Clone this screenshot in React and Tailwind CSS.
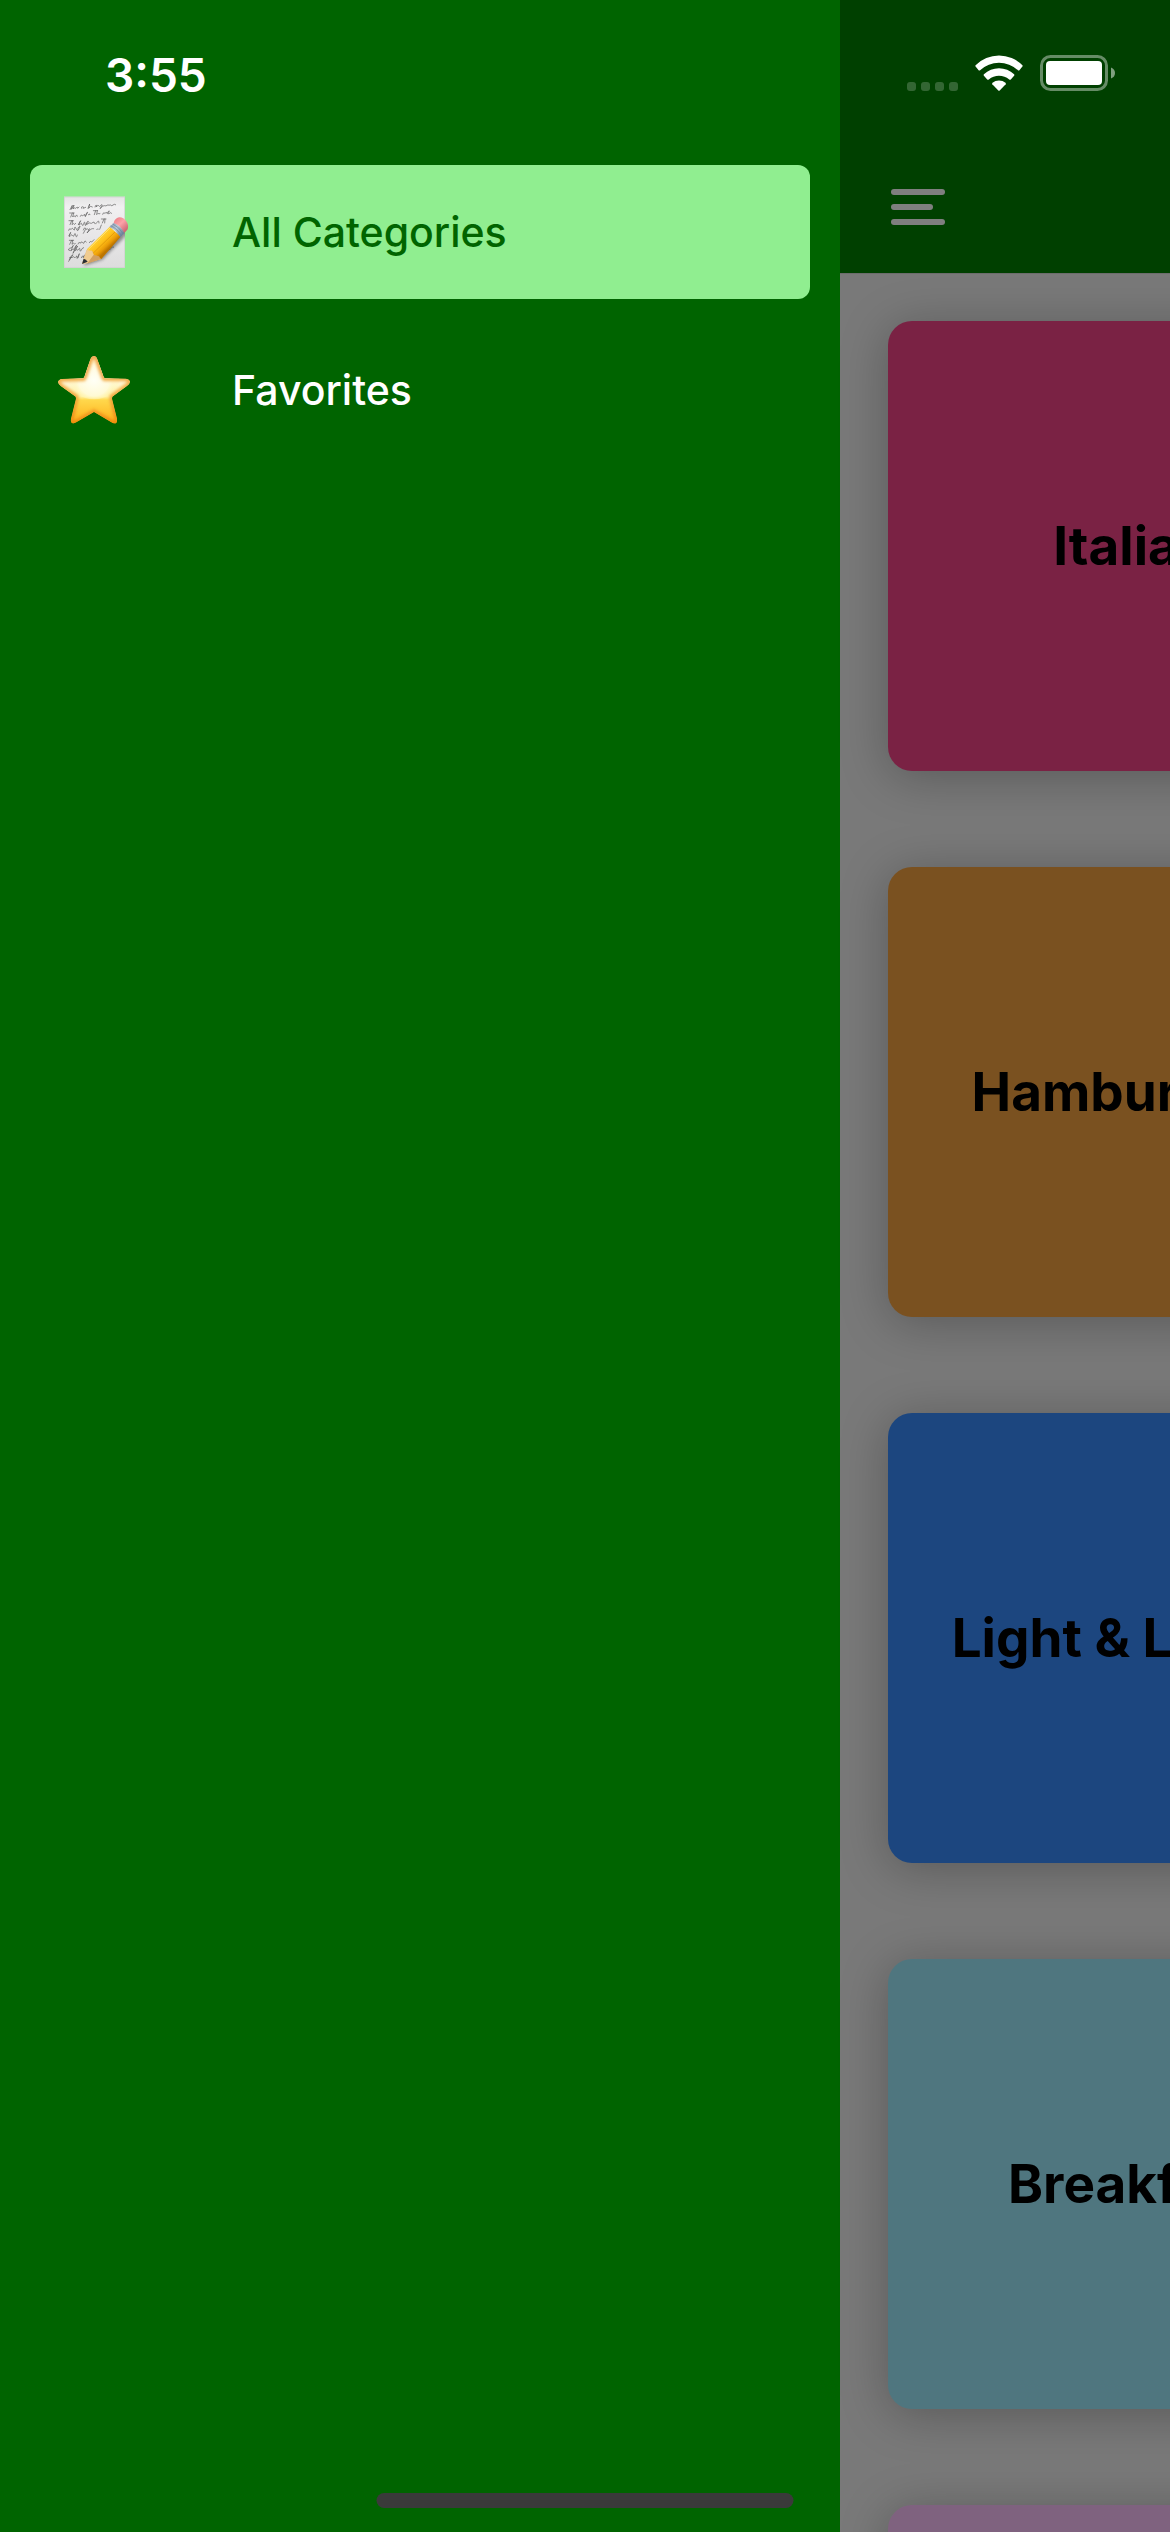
const menuItems = [
  { label: "All Categories", icon: MemoIcon, active: true },
  { label: "Favorites", icon: StarIcon, active: false },
];

const categories = [
  { title: "Italian", color: "bg-[#f54489]" },
  { title: "Hamburgers", color: "bg-[#f5a241]" },
  { title: "Light & Lovely", color: "bg-[#388cff]" },
  { title: "Breakfast", color: "bg-[#9fecff]" },
  { title: "Summer", color: "bg-[#ffc5ff]" },
];

function MemoIcon() {
  return (
    <svg viewBox="54 71 216 231" className="h-[77px] w-18 shrink-0" aria-hidden="true">
      <defs>
        <linearGradient id="paper" x1="0" y1="0" x2="0" y2="1">
          <stop offset="0" stopColor="#e4e4e4" />
          <stop offset="0.15" stopColor="#f1f0f1" />
          <stop offset="1" stopColor="#dddcdd" />
        </linearGradient>
        <linearGradient id="pencil" x1="170" y1="200" x2="204" y2="236" gradientUnits="userSpaceOnUse">
          <stop offset="0" stopColor="#ffd23a" />
          <stop offset="0.3" stopColor="#ffc824" />
          <stop offset="0.55" stopColor="#fcb913" />
          <stop offset="0.8" stopColor="#e99a08" />
          <stop offset="1" stopColor="#bd7500" />
        </linearGradient>
        <linearGradient id="ferrule" x1="214" y1="164" x2="246" y2="192" gradientUnits="userSpaceOnUse">
          <stop offset="0" stopColor="#8fa3b8" />
          <stop offset="0.4" stopColor="#b9c9d8" />
          <stop offset="1" stopColor="#71859c" />
        </linearGradient>
        <linearGradient id="eraser" x1="228" y1="146" x2="262" y2="182" gradientUnits="userSpaceOnUse">
          <stop offset="0" stopColor="#f0848c" />
          <stop offset="0.4" stopColor="#fba3a8" />
          <stop offset="1" stopColor="#c65d6c" />
        </linearGradient>
        <filter id="soft" x="-20%" y="-20%" width="140%" height="140%">
          <feGaussianBlur stdDeviation="4" />
        </filter>
        <clipPath id="sheet">
          <rect x="72" y="79" width="183" height="214" />
        </clipPath>
      </defs>
      <rect x="72" y="79" width="183" height="214" fill="url(#paper)" />
      <rect x="73" y="80" width="181" height="212" fill="none" stroke="#cfcfcf" strokeWidth="2" />
      <g fill="none" stroke="#5a5a5a" strokeWidth="2" strokeLinecap="round" strokeLinejoin="round">
        <path d="M90 118l7-13-3 12 8-13-3 12q4-6 5-3t5-1 4 2l4-4m8 4q-2-6 3-5t2 5l7-3m7 3 5-13-3 13 6-6 5 2m8 0q0-6 5-5l-1 5q5-8 7-4t5 1q4-7 6-3l-7 11q10-11 14-9t7-1 6 0q4-3 6 0t6-1 8-1" />
        <path d="M89 128h13m-5 0-5 12m9-12-3 12q4-6 6-2t4-2 4 2m9 0q3-7 5-3t5-1 3 1 4-3q4-9 5-6l-7 13m9-6q6-5 5 0m10-12h13m-6 0-4 12m9-12-2 12q4-6 6-3t4-1m8 3q2-7 5-4t4-1 4 2q7-10 7-7t-5 8q5 1 7-2t5 1" />
        <path d="M87 151h13m-5 0-5 12m8-12-2 12q5-6 6-2t5-2m8 4 7-12-6 12q4 1 6-3t4 3 5-3 4 1 5-4q5-7 5-4t-6 9q6-1 7-3t4-1 4 1 5-3 5 3 7-3 6 2m7-12h14m-6 0-5 12m8-12-1 12" />
        <path d="M86 180q2-7 5-4t4-1 5 2 4-3 5 2 5-3q7-9 6-4l-5 10m15 0q3-9 6-6t0 5l-6 11m9-12q5-4 5 0t5-2l-8 13q14-15 17-13t3 0m9 3q3-5 5-2m4 1 5-13" />
        <path d="M87 196q5-7 5-10l-5 12q4 1 6-3t5 1 5-3 4 2 5-1" />
        <path d="M88 210h13m-6 0-6 12m9-12-2 12q5-6 6-2t4-1m8 2q2-7 6-4t4-1 4 1 5-2 6 0m9 2q3-6 5-3t5-2l4-4" />
        <path d="M91 241q-8-1-5-5t8-3l6-8-7 16q5-5 8-4 8-13 9-13l-11 25q8-19 14-22l-7 14q4-5 5-2t5-3 4 3 6-4l5-3m72 9q4-8 5-4t5-3 8-4" />
        <path d="M88 268q5-14 11-15l-13 20m3-11 9-1q4-4 5 0t5-2 3 3 7-12l-4 12m10 0q4-8 7-5t-2 5l8-11" />
      </g>
      <g clipPath="url(#sheet)">
        <path d="M132 286l55-18 62-63 14-20-4-22-124 111z" fill="#333" opacity="0.5" filter="url(#soft)" />
      </g>
      <path d="M126 280l14-42 38-38 27 40-23 27z" fill="#e7bd7d" />
      <path d="M142 236l13 6 6 12 15 2 6 10-46 14-10 0z" fill="#f0cb90" />
      <path d="M161 253l15 3 7 10-42 14z" fill="#d29f60" />
      <path d="M126 281l5-16q7 2 12 9z" fill="#292e35" />
      <path d="M141 237l68-68 33 30-58 67q-3 1-7-8-5-1-15-4-1-11-8-14-8 2-13-3z" fill="url(#pencil)" />
      <path d="M159 249l66-64" stroke="#e39b0d" strokeWidth="3" />
      <path d="M145 237l66-65" stroke="#ffe375" strokeWidth="3" />
      <path d="M208 170l14-13q20 8 31 31l-12 13q-12-23-33-31z" fill="url(#ferrule)" />
      <path d="M212 166q20 9 33 31M218 161q20 9 32 30" fill="none" stroke="#6d8298" strokeWidth="2" />
      <path d="M221 158q3-14 16-17 13-1 22 12 8 11 4 24l-10 11q-11-23-32-30z" fill="url(#eraser)" />
    </svg>
  );
}

function StarIcon() {
  const outline =
    "M162 77Q169 77 172 87L191 140 194 144 258 145Q269 147 270 154 270 160 261 167L217 199 216 205 231 265Q232 275 228 279 222 281 214 276L162 245 109 276Q101 281 95 278 91 274 93 265L108 205 107 199 63 168Q54 161 54 155 56 147 66 146L130 144 133 140 151 87Q155 77 162 77Z";
  return (
    <svg viewBox="54 65 216 231" className="h-[77px] w-18 shrink-0" aria-hidden="true">
      <defs>
        <linearGradient id="star" x1="0" y1="77" x2="0" y2="280" gradientUnits="userSpaceOnUse">
          <stop offset="0" stopColor="#fff1cf" />
          <stop offset="0.35" stopColor="#fff9e4" />
          <stop offset="0.6" stopColor="#fff0a0" />
          <stop offset="0.65" stopColor="#ffd84c" />
          <stop offset="1" stopColor="#ffae18" />
        </linearGradient>
        <linearGradient id="rim" x1="0" y1="77" x2="0" y2="280" gradientUnits="userSpaceOnUse">
          <stop offset="0" stopColor="#f0a850" />
          <stop offset="0.5" stopColor="#f3b04c" />
          <stop offset="1" stopColor="#f08c0c" />
        </linearGradient>
        <radialGradient id="shine" cx="162" cy="150" r="62" gradientUnits="userSpaceOnUse">
          <stop offset="0" stopColor="#fffff6" />
          <stop offset="0.75" stopColor="#fffce0" stopOpacity="0.8" />
          <stop offset="1" stopColor="#fff8b8" stopOpacity="0.3" />
        </radialGradient>
        <filter id="glow" x="-10%" y="-10%" width="120%" height="120%">
          <feGaussianBlur stdDeviation="4" />
        </filter>
        <clipPath id="starShape">
          <path d={outline} />
        </clipPath>
      </defs>
      <g clipPath="url(#starShape)">
        <path d={outline} fill="url(#star)" />
        <ellipse cx="162" cy="145" rx="76" ry="62" fill="url(#shine)" />
        <path d={outline} fill="none" stroke="url(#rim)" strokeWidth="16" filter="url(#glow)" />
      </g>
    </svg>
  );
}

function StatusBar() {
  return (
    <div className="pointer-events-none absolute inset-x-0 top-0 flex items-start justify-between pt-[55px] pr-[55px] pl-[105px] text-white">
      <time className="text-[46px] leading-10 font-semibold">3:55</time>
      <div className="flex items-center gap-[17px]">
        <div className="flex h-9 items-end gap-[5px]">
          <span className="size-[9px] rounded-[3px] bg-white/20" />
          <span className="size-[9px] rounded-[3px] bg-white/20" />
          <span className="size-[9px] rounded-[3px] bg-white/20" />
          <span className="size-[9px] rounded-[3px] bg-white/20" />
        </div>
        <svg viewBox="0 0 48 36" className="h-9 w-12" fill="currentColor" aria-label="Wi-Fi">
          <path d="M.6 11.6Q-.1 11 .6 10.2A33 33 0 0 1 47.4 10.2Q48.1 11 47.4 11.6L44.4 15.2Q43.7 16 42.9 15.2A28 28 0 0 0 5.1 15.2Q4.3 16 3.6 15.2Z" />
          <path d="M8.9 20.7Q8.2 20 8.9 19.2A22 22 0 0 1 39.1 19.2Q39.8 20 39.1 20.7L35.8 24.4Q35 25.2 34.2 24.4A16 16 0 0 0 13.8 24.4Q13 25.2 12.2 24.4Z" />
          <path d="M17.3 29.2Q16.8 28.5 17.5 27.8A10 10 0 0 1 30.5 27.8Q31.2 28.5 30.7 29.2L24.7 35.4Q24 36 23.3 35.4Z" />
        </svg>
        <svg viewBox="0 0 75 36" className="h-9 w-[75px]" aria-label="Battery full">
          <rect x="1.5" y="1.5" width="65" height="33" rx="9" fill="none" stroke="#fff" strokeOpacity="0.4" strokeWidth="3" />
          <rect x="6" y="6" width="56" height="24" rx="4" fill="#fff" />
          <path d="M71 12.5Q75 14 75 18T71 23.5Z" fill="#fff" fillOpacity="0.5" />
        </svg>
      </div>
    </div>
  );
}

function Drawer() {
  return (
    <nav className="w-[840px] shrink-0 bg-[#006400] px-[30px] pt-[165px]">
      <ul className="flex flex-col gap-6">
        {menuItems.map(({ label, icon: Icon, active }) => (
          <li key={label}>
            <a
              href="#"
              aria-current={active ? "page" : undefined}
              className={`flex h-[134px] items-center gap-[102px] rounded-xl px-7 text-[41px] leading-none font-medium ${
                active ? "bg-[#90ee90] text-[#006400]" : "text-white"
              }`}
            >
              <Icon />
              {label}
            </a>
          </li>
        ))}
      </ul>
    </nav>
  );
}

function CategoriesScreen() {
  return (
    <main className="relative w-full shrink-0 bg-[#f2f2f2]">
      <header className="flex h-[274px] items-center border-b border-[#d8d8d8] bg-[#008000] px-[51px] pt-[141px]">
        <button type="button" aria-label="Open menu" className="flex w-[54px] flex-col gap-[9px]">
          <span className="h-1.5 w-full rounded-full bg-white" />
          <span className="h-1.5 w-[42px] rounded-full bg-white" />
          <span className="h-1.5 w-full rounded-full bg-white" />
        </button>
      </header>
      <div className="flex w-1/2 flex-col gap-24 pt-[47px] pl-12">
        {categories.map(({ title, color }) => (
          <button
            type="button"
            key={title}
            className={`flex h-[450px] w-[489px] shrink-0 items-center justify-center rounded-3xl text-[53px] leading-none font-bold text-black shadow-[0_6px_48px_rgba(0,0,0,0.26)] ${color}`}
          >
            {title}
          </button>
        ))}
      </div>
      <div className="absolute inset-0 bg-black/50" />
    </main>
  );
}

export default function App() {
  return (
    <div className="relative flex h-screen overflow-hidden bg-[#006400] font-[Inter,sans-serif]">
      <Drawer />
      <CategoriesScreen />
      <StatusBar />
      <div className="absolute bottom-6 left-1/2 h-[15px] w-[417px] -translate-x-1/2 rounded-full bg-[#3a3a3a]" />
    </div>
  );
}
